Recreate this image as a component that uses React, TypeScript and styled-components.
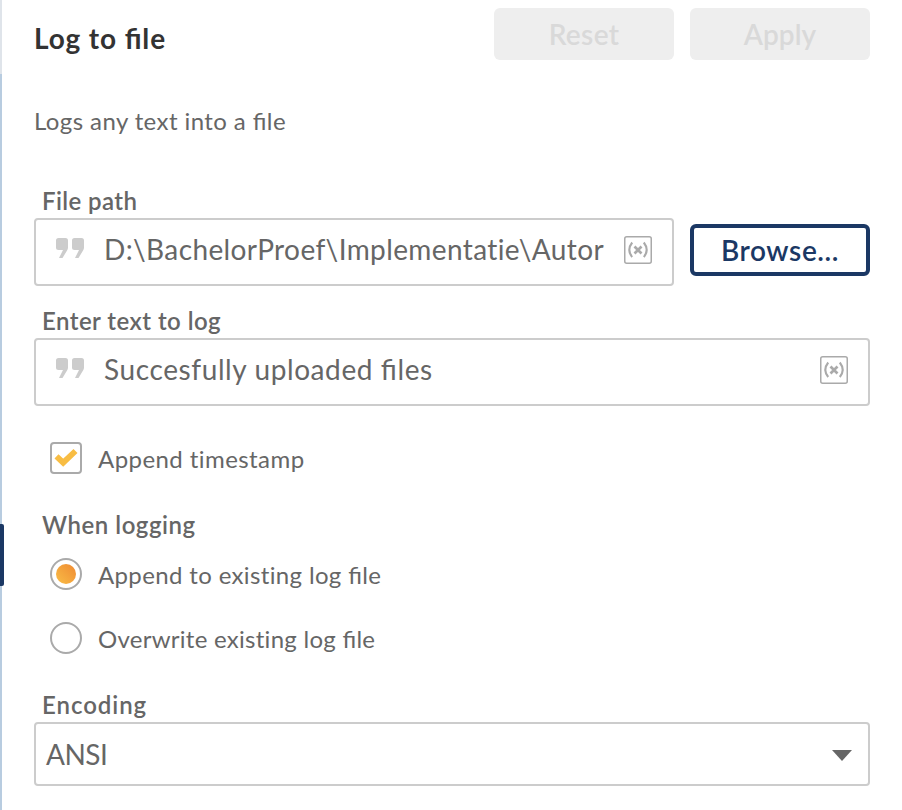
import React from "react";
import styled, { createGlobalStyle, css } from "styled-components";

const GlobalStyle = createGlobalStyle`
  *, *::before, *::after { box-sizing: border-box; }
  body {
    margin: 0;
    background: #fff;
    color: #666;
    font-family: Lato, "Open Sans", sans-serif;
  }
`;

const Page = styled.div`
  display: flex;
  width: 902px;
  height: 810px;
  overflow: hidden;
`;

const Rail = styled.div`
  flex: none;
  display: flex;
  flex-direction: column;
  width: 4px;
`;

const RailSegment = styled.div<{ $height?: number; $active?: boolean; $color: string }>`
  flex: ${(p) => (p.$height ? "none" : "1")};
  height: ${(p) => (p.$height ? `${p.$height}px` : "auto")};
  width: ${(p) => (p.$active ? 4 : 2)}px;
  background: ${(p) => p.$color};
  border-radius: ${(p) => (p.$active ? "0 2px 2px 0" : "0")};
`;

const Panel = styled.main`
  flex: 1;
  padding: 8px 32px 24px 30px;
`;

const Header = styled.header`
  display: flex;
  align-items: flex-start;
  gap: 16px;
  height: 52px;
`;

const Title = styled.h1`
  flex: 1;
  margin: 4px 0 0;
  color: #333;
  font-size: 28px;
  font-weight: 700;
  line-height: 52px;
  letter-spacing: 0.87px;
`;

const Button = styled.button<{ $outlined?: boolean; $tracking: number }>`
  flex: none;
  width: 180px;
  height: 52px;
  padding: 0 0 1px;
  border: 0;
  border-radius: 6px;
  background: #eee;
  color: #d9d9d9;
  font: 600 28px/40px Lato, sans-serif;
  letter-spacing: ${(p) => p.$tracking}px;
  ${(p) =>
    p.$outlined &&
    css`
      margin-top: 6px;
      border: 4px solid #1b3864;
      background: #fff;
      color: #1b3864;
    `}
`;

const Description = styled.p<{ $tracking: number }>`
  margin: 46px 0 50px;
  font-size: 24px;
  line-height: 30px;
  letter-spacing: ${(p) => p.$tracking}px;
`;

const Label = styled.div<{ $tracking: number }>`
  margin: 0 0 2px 8px;
  font-size: 24px;
  font-weight: 600;
  line-height: 30px;
  letter-spacing: ${(p) => p.$tracking}px;
`;

/* Keeps the joined "fi" that letter-spacing would otherwise break apart. */
const Joined = styled.span`
  font-feature-settings: "liga" 1;
`;

const FieldRow = styled.div`
  display: flex;
  align-items: flex-start;
  gap: 16px;
  margin-bottom: 20px;
`;

const Field = styled.div`
  flex: 1;
  min-width: 0;
  display: flex;
  align-items: center;
  height: 68px;
  padding: 0 20px 4px;
  border: 2px solid #ccc;
  border-radius: 4px;
`;

const FieldText = styled.span<{ $tracking: number }>`
  flex: 1;
  min-width: 0;
  margin-left: 20px;
  padding-bottom: 2px;
  font-size: 28px;
  line-height: 36px;
  white-space: nowrap;
  letter-spacing: ${(p) => p.$tracking}px;
`;

const QuoteSvg = styled.svg`
  flex: none;
  margin-bottom: 3px;
`;

const VariableSvg = styled.svg`
  flex: none;
`;

const Options = styled.div`
  display: flex;
  flex-direction: column;
  gap: 32px;
  padding: 16px 0 36px 16px;
`;

const Option = styled.label`
  display: flex;
  align-items: center;
  height: 32px;
`;

const TimestampOption = styled(Option)`
  margin: 36px 0 36px 16px;
`;

const OptionText = styled.span<{ $tracking: number }>`
  margin-left: 16px;
  padding-top: 1px;
  font-size: 24px;
  line-height: 30px;
  letter-spacing: ${(p) => p.$tracking}px;
`;

const Checkbox = styled.span`
  display: flex;
  width: 32px;
  height: 32px;
  border: 2px solid #aaa;
  border-radius: 4px;
`;

const Radio = styled.span<{ $checked?: boolean }>`
  display: grid;
  place-items: center;
  width: 32px;
  height: 32px;
  border: 2px solid #aaa;
  border-radius: 50%;
  ${(p) =>
    p.$checked &&
    css`
      &::after {
        content: "";
        width: 20px;
        height: 20px;
        border-radius: 50%;
        background: linear-gradient(45deg, #f9bd46, #ef8a32);
      }
    `}
`;

const Select = styled.div`
  display: flex;
  align-items: center;
  justify-content: space-between;
  height: 64px;
  padding: 0 16px 0 10px;
  border: 2px solid #ccc;
  border-radius: 4px;
  font-size: 28px;
  letter-spacing: -0.5px;
  line-height: 40px;
`;

const Arrow = styled.svg`
  margin-top: 3px;
`;

const QuoteIcon = () => (
  <QuoteSvg width="28" height="21" viewBox="0 0 28 21" fill="#ccc">
    <path d="M2.500 0h7q2.500 0 2.500 2.500v7q0 1.500-.8 2.800L6.500 20H3L7 12H2.500Q0 12 0 9.500v-7Q0 0 2.500 0z" />
    <path d="M18.500 0h7q2.500 0 2.500 2.500v7q0 1.500-.8 2.800L22.500 20H19l4-8h-4.500Q16 12 16 9.500v-7Q16 0 18.500 0z" />
  </QuoteSvg>
);

const VariableIcon = () => (
  <VariableSvg width="28" height="28" viewBox="0 0 28 28" fill="none" stroke="#aaa">
    <rect x=".75" y=".75" width="26.500" height="26.500" rx="2" strokeWidth="1.500" />
    <path d="M8.200 6.500Q2.400 14 8.200 21M19.800 6.500Q25.600 14 19.800 21" strokeWidth="2.100" />
    <path d="M10.500 10.500 17.500 17.500M17.500 10.500 10.500 17.500" strokeWidth="2.700" />
  </VariableSvg>
);

export default function App() {
  return (
    <>
      <GlobalStyle />
      <Page>
        <Rail>
          <RailSegment $height={74} $color="#dfe4ea" />
          <RailSegment $height={450} $color="#b8cce0" />
          <RailSegment $height={62} $active $color="#1b3864" />
          <RailSegment $color="#b8cce0" />
        </Rail>
        <Panel>
          <Header>
            <Title>Log to <Joined>file</Joined></Title>
            <Button $tracking={0.35}>Reset</Button>
            <Button $tracking={0.1}>Apply</Button>
          </Header>
          <Description $tracking={0.41}>Logs any text into a <Joined>file</Joined></Description>

          <Label $tracking={0.4}>File path</Label>
          <FieldRow>
            <Field>
              <QuoteIcon />
              <FieldText $tracking={0.385}>{"D:\\BachelorProef\\Implementatie\\Autor"}</FieldText>
              <VariableIcon />
            </Field>
            <Button $outlined $tracking={0.6}>Browse...</Button>
          </FieldRow>

          <Label $tracking={0.46}>Enter text to log</Label>
          <Field>
            <QuoteIcon />
            <FieldText $tracking={0.6}>Succesfully uploaded <Joined>files</Joined></FieldText>
            <VariableIcon />
          </Field>

          <TimestampOption>
            <Checkbox>
              <svg width="28" height="28" viewBox="0 0 28 28" fill="none" stroke="#f8bd43" strokeWidth="5.800">
                <path d="M4.500 12.300 11.200 18.700 23.500 7" />
              </svg>
            </Checkbox>
            <OptionText $tracking={0.43}>Append timestamp</OptionText>
          </TimestampOption>

          <Label $tracking={0.55}>When logging</Label>
          <Options>
            <Option>
              <Radio $checked />
              <OptionText $tracking={0.36}>Append to existing log <Joined>file</Joined></OptionText>
            </Option>
            <Option>
              <Radio />
              <OptionText $tracking={0.27}>Overwrite existing log <Joined>file</Joined></OptionText>
            </Option>
          </Options>

          <Label $tracking={0.95}>Encoding</Label>
          <Select>
            ANSI
            <Arrow width="20" height="11" viewBox="0 0 20 11" fill="#666">
              <path d="M0 0H20L10 11Z" />
            </Arrow>
          </Select>
        </Panel>
      </Page>
    </>
  );
}
